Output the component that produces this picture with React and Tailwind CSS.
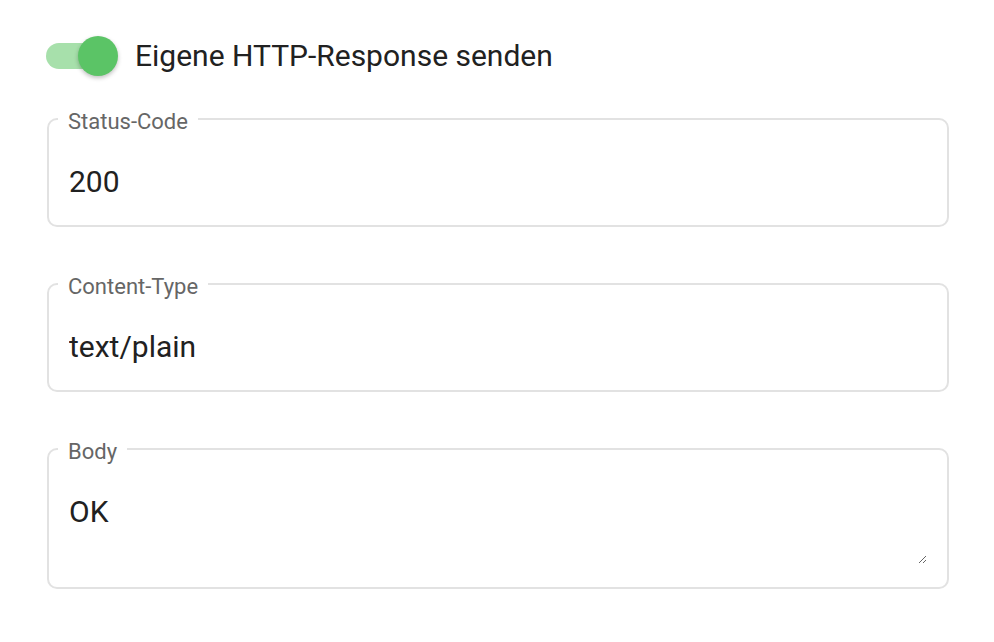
import React from "react";

const Field = ({ label, value, multiline = false }) => {
  return (
    <fieldset className="border-2 border-[#e2e2e2] rounded-[10px] px-[20px] pb-[23px] m-0 min-w-0">
      <legend className="-ml-[11px] px-[10px] pt-[6px] text-[22px] leading-[26px] text-[#666666]">{label}</legend>
      {multiline ? (
        <textarea
          defaultValue={value}
          className="block w-full mt-[27px] h-[72px] text-[30px] leading-[40px] text-[#212121] outline-none bg-transparent resize-y p-0 border-0"
          style={{ fontFamily: "Roboto, sans-serif" }}
        />
      ) : (
        <input
          defaultValue={value}
          className="block w-full mt-[27px] h-[40px] text-[30px] leading-[40px] text-[#212121] outline-none bg-transparent p-0 border-0"
          style={{ fontFamily: "Roboto, sans-serif" }}
        />
      )}
    </fieldset>
  );
};

const Toggle = () => {
  return (
    <div className="relative w-[72px] h-[40px] flex items-center shrink-0">
      <div className="w-[66px] h-[26px] rounded-full bg-[#a7e0ab]" />
      <div className="absolute right-0 top-0 w-[40px] h-[40px] rounded-full bg-[#5bc466] shadow-[0_2px_4px_rgba(0,0,0,0.25)]" />
    </div>
  );
};

export default function App() {
  return (
    <div className="w-[994px] h-[642px] bg-white font-['Roboto',sans-serif] pl-[47px] pr-[45px] pt-[36px]">
      <div className="flex items-center gap-[17px] -ml-[1px]">
        <Toggle />
        <span className="text-[30px] leading-[40px] text-[#212121]">Eigene HTTP-Response senden</span>
      </div>
      <div className="flex flex-col gap-[41px] mt-[27px]">
        <Field label="Status-Code" value="200" />
        <Field label="Content-Type" value="text/plain" />
        <Field label="Body" value="OK" multiline />
      </div>
    </div>
  );
}
